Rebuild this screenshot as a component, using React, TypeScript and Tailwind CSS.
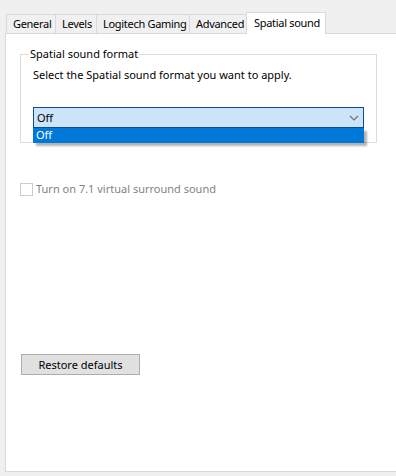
import React from 'react'

const tabs = [
  { label: 'General', w: 'w-[50px]' },
  { label: 'Levels', w: 'w-[41px]' },
  { label: 'Logitech Gaming', w: 'w-[93px]' },
  { label: 'Advanced', w: 'w-[58px]' },
]

const App = () => {
  return (
    <div
      className="w-[396px] h-[476px] bg-[#f0f0f0] overflow-hidden text-[11px] text-black"
      style={{ fontFamily: '"Segoe UI", "Noto Sans", sans-serif' }}
    >
      {/* Tabs */}
      <div className="flex items-end pt-[12px] pl-[6px] tracking-[-0.3px]">
        {tabs.map((t, i) => (
          <div
            key={t.label}
            className={`${t.w} h-[19px] border-t border-r border-[#d9d9d9] ${i === 0 ? 'border-l' : ''} bg-[#f0f0f0] pl-[6px] leading-[18px] whitespace-nowrap`}
          >
            {t.label}
          </div>
        ))}
        <div className="relative z-10 -ml-[2px] -mb-px w-[80px] h-[22px] border-t border-l border-r border-[#d9d9d9] bg-white pl-[7px] leading-[19px] whitespace-nowrap">
          Spatial sound
        </div>
      </div>

      {/* Panel */}
      <div className="ml-[5px] w-[400px] h-[439px] border border-[#d9d9d9] bg-white">
        <fieldset className="ml-[14px] mt-[12px] w-[357px] border border-[#dcdcdc] p-0">
          <legend className="ml-[8px] px-[1px] leading-[16px]">Spatial sound format</legend>
          <div className="px-[12px] pb-[14px]">
            <div className="mt-[5px] leading-[16px]">Select the Spatial sound format you want to apply.</div>
            <div className="relative mt-[24px]">
              <div className="h-[21px] border border-[#0b4c94] bg-[#cce4f7] flex items-center justify-between pl-[3px] pr-[4px]">
                <span className="leading-[16px]">Off</span>
                <svg width="10" height="6" viewBox="0 0 10 6">
                  <path d="M1 1 L5 5 L9 1" fill="none" stroke="#7a6e6e" strokeWidth="1.2" />
                </svg>
              </div>
              <div className="absolute left-0 right-0 top-full h-[15px] bg-[#0078d7] text-white pl-[3px] leading-[14px] shadow-[3px_3px_2px_rgba(0,0,0,0.3)]">
                Off
              </div>
            </div>
          </div>
        </fieldset>

        <div className="ml-[14px] mt-[38px] flex items-center gap-[3px] text-[#838383]">
          <div className="w-[13px] h-[13px] border border-[#cccccc] bg-white" />
          <span className="leading-[16px]">Turn on 7.1 virtual surround sound</span>
        </div>

        <button className="ml-[15px] mt-[157px] w-[119px] h-[21px] border border-[#adadad] bg-[#e1e1e1] leading-[16px] flex items-center justify-center">
          Restore defaults
        </button>
      </div>
    </div>
  )
}

export default App
